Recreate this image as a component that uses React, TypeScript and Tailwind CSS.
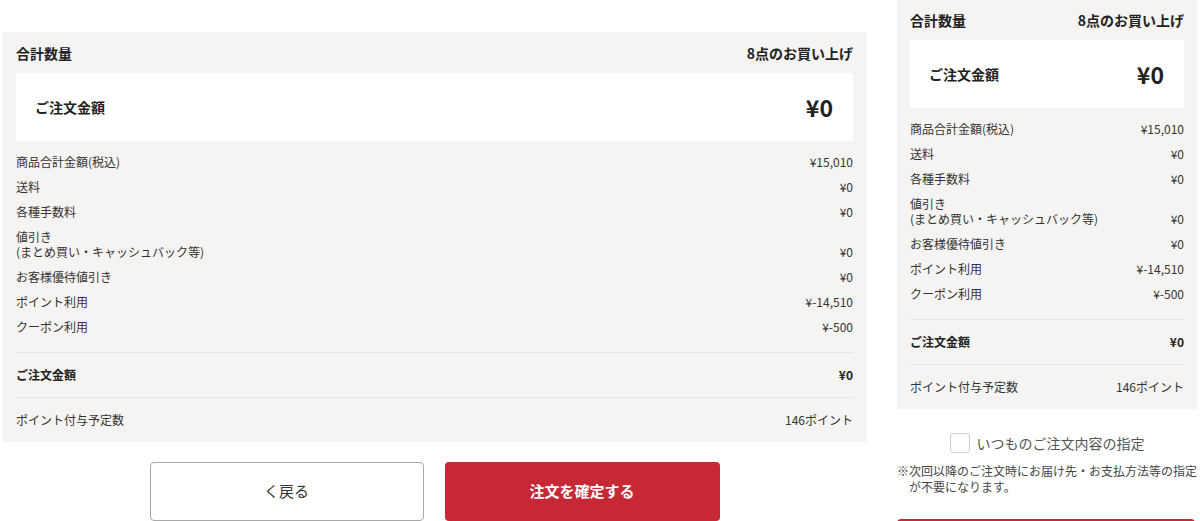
import React from "react";

type Row = { label: string[]; value: string };

const rows: Row[] = [
  { label: ["商品合計金額(税込)"], value: "¥15,010" },
  { label: ["送料"], value: "¥0" },
  { label: ["各種手数料"], value: "¥0" },
  { label: ["値引き", "(まとめ買い・キャッシュバック等)"], value: "¥0" },
  { label: ["お客様優待値引き"], value: "¥0" },
  { label: ["ポイント利用"], value: "¥-14,510" },
  { label: ["クーポン利用"], value: "¥-500" },
];

// Order summary panel, used in both columns
function Summary({ compact }: { compact?: boolean }) {
  return (
    <div className={`bg-[#f5f4f2] pt-[14px] pb-[15px] ${compact ? "px-[13px] -mt-px" : "px-[14px]"}`}>
      <div className="flex justify-between text-[14px] leading-[15px] font-bold text-[#222]">
        <span>合計数量</span>
        <span>8点のお買い上げ</span>
      </div>

      <div className="mt-[12px] h-[68px] bg-white flex items-center justify-between pl-[19px] pr-[20px] text-[#222]">
        <span className="text-[14px] font-bold">ご注文金額</span>
        <span className="text-[23px] font-bold">¥0</span>
      </div>

      <div className="mt-[13px] flex flex-col gap-[10px] text-[12px] leading-[15px] text-[#333]">
        {rows.map((r) => (
          <div key={r.label.join("")} className="flex justify-between items-end">
            <div>
              {r.label.map((l) => (
                <div key={l}>{l}</div>
              ))}
            </div>
            <span>{r.value}</span>
          </div>
        ))}
      </div>

      <div className="mt-[18px] border-t border-[#e6e4e1] pt-[13px] pb-[14px] flex justify-between text-[12px] leading-[17px] font-bold text-[#222]">
        <span>ご注文金額</span>
        <span>¥0</span>
      </div>

      <div className="border-t border-[#e6e4e1] pt-[14px] flex justify-between text-[12px] leading-[15px] text-[#333]">
        <span>ポイント付与予定数</span>
        <span>146ポイント</span>
      </div>
    </div>
  );
}

export default function App() {
  return (
    <div className="h-[521px] overflow-hidden bg-white font-['Noto_Sans_CJK_JP','Noto_Sans',sans-serif]">
      <div className="flex gap-[30px] pl-[2px]">
        {/* main column */}
        <div className="w-[865px] mt-[32px]">
          <Summary />
          <div className="mt-[20px] flex justify-center gap-[21px]">
            <button className="w-[274px] h-[59px] bg-white border border-[#a9a9a9] rounded-[4px] text-[15px] text-[#333]">
              く戻る
            </button>
            <button className="w-[275px] h-[59px] bg-[#c72835] rounded-[4px] text-[15px] font-bold text-white">
              注文を確定する
            </button>
          </div>
        </div>

        {/* side column */}
        <div className="w-[300px]">
          <Summary compact />
          <label className="mt-[24px] flex items-center justify-center gap-[7px]">
            <span className="w-[20px] h-[20px] border border-[#cfcfcf] rounded-[3px] bg-white" />
            <span className="text-[14px] leading-[20px] text-[#555]">いつものご注文内容の指定</span>
          </label>
          <p className="mt-[10px] pl-[12px] -indent-[12px] text-[12px] leading-[16px] text-[#444]">
            ※次回以降のご注文時にお届け先・お支払方法等の指定が不要になります。
          </p>
          {/* side confirm button, only its top edge is in view */}
          <button aria-label="注文を確定する" className="mt-[24px] w-[298px] h-[59px] bg-[#c72835] rounded-[4px]" />
        </div>
      </div>
    </div>
  );
}
